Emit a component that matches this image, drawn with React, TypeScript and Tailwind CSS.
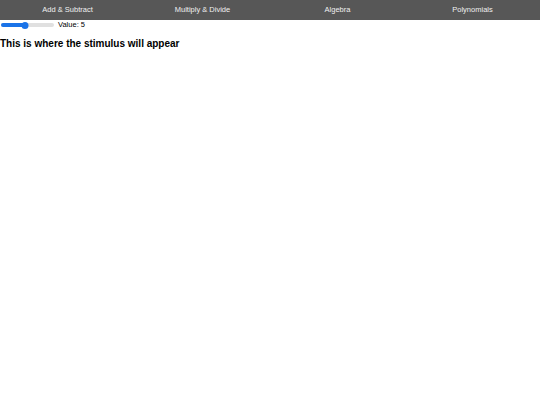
import React, { useState } from 'react';

const topics = ['Add & Subtract', 'Multiply & Divide', 'Algebra', 'Polynomials'];

const App = () => {
  const [value] = useState(5);
  // slider range 1..10
  const pct = ((value - 1) / 9) * 100;

  return (
    <div className="min-h-screen bg-white font-['Liberation_Sans',Arial,sans-serif] text-black">
      <nav className="grid grid-cols-4 h-[20px] bg-[#575757]">
        {topics.map((t) => (
          <div key={t} className="flex items-center justify-center text-[7.5px] text-[#f0f0f0]">
            {t}
          </div>
        ))}
      </nav>

      <div className="flex items-center h-[10px] pl-[1px] gap-[4px]">
        <div className="relative w-[53px] h-[7px] flex items-center">
          <div className="w-full h-[4px] rounded-full bg-[#e0e0e0]" />
          <div className="absolute left-0 h-[4px] rounded-full bg-[#1a73e8]" style={{ width: `${pct}%` }} />
          <div
            className="absolute w-[7px] h-[7px] rounded-full bg-[#1a73e8] -translate-x-1/2"
            style={{ left: `${pct}%` }}
          />
        </div>
        <span className="text-[7.5px] leading-none">Value: {value}</span>
      </div>

      <h3 className="mt-[9px] text-[10px] font-bold leading-none">This is where the stimulus will appear</h3>
    </div>
  );
};

export default App;
